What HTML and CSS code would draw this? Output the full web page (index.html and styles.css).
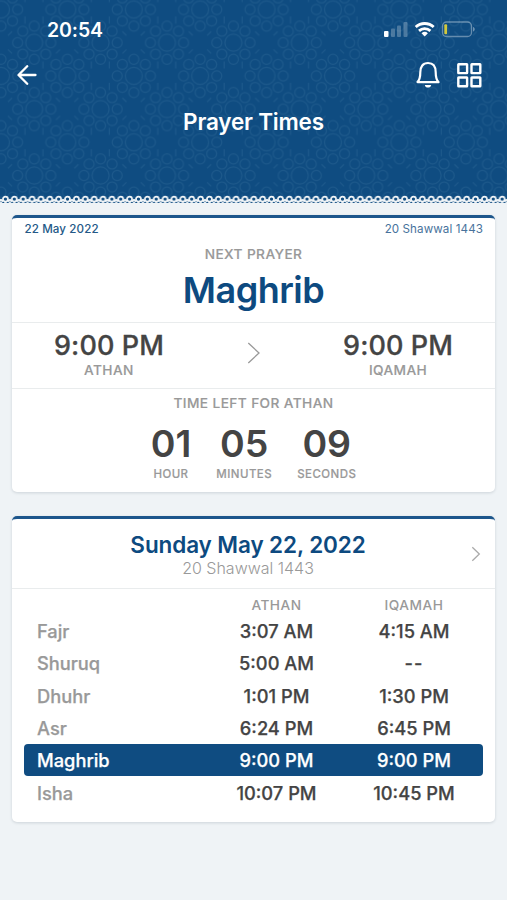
FILE: index.html
```html
<!DOCTYPE html>
<html lang="en">
<head>
<meta charset="utf-8">
<title>Prayer Times</title>
<link rel="stylesheet" href="styles.css">
</head>
<body>
<header class="hero">
  <svg class="hero-pattern" width="507" height="204" aria-hidden="true">
    <defs>
      <pattern id="stars" x="1" y="9.5" width="66.4" height="66.4" patternUnits="userSpaceOnUse">
        <g fill="none" stroke="#5d91b8" stroke-opacity=".17" stroke-width="1.2">
          <circle cx="33.2" cy="33.2" r="8.500"/>
          <circle cx="33.2" cy="16.6" r="5"/><circle cx="33.2" cy="49.8" r="5"/>
          <circle cx="16.6" cy="33.2" r="5"/><circle cx="49.8" cy="33.2" r="5"/>
          <circle cx="21.7" cy="21.7" r="5"/><circle cx="44.7" cy="21.7" r="5"/>
          <circle cx="21.7" cy="44.7" r="5"/><circle cx="44.7" cy="44.7" r="5"/>
          <circle cx="0" cy="0" r="8.500"/><circle cx="66.4" cy="0" r="8.500"/><circle cx="0" cy="66.4" r="8.500"/><circle cx="66.4" cy="66.4" r="8.500"/>
          <circle cx="16.6" cy="0" r="5"/><circle cx="49.8" cy="0" r="5"/><circle cx="16.6" cy="66.4" r="5"/><circle cx="49.8" cy="66.4" r="5"/>
          <circle cx="0" cy="16.6" r="5"/><circle cx="66.4" cy="16.6" r="5"/><circle cx="0" cy="49.8" r="5"/><circle cx="66.4" cy="49.8" r="5"/>
          <circle cx="11.5" cy="11.5" r="5"/><circle cx="54.9" cy="11.5" r="5"/><circle cx="11.5" cy="54.9" r="5"/><circle cx="54.9" cy="54.9" r="5"/>
          <path d="M7 26 11 22M55 22 59 26M7 40 11 44M55 44 59 40M24 7V14M42 7V14M24 52V59M42 52V59"/>
        </g>
      </pattern>
      <pattern id="lace" x="1" y="195" width="8.87" height="9" patternUnits="userSpaceOnUse">
        <path d="M0 8H8.87V9H0Z" fill="#eff3f6"/>
        <path d="M3.300 6.500H5.600V8H3.300ZM0 6.500H1.200V8H0ZM7.700 6.500H8.870V8H7.700Z" fill="#dfe8ef"/>
        <circle cx="4.43" cy="4.1" r="2.500" fill="#0f4c81" stroke="#f3f6f8" stroke-width="1.700"/>
        <path d="M0 4.500 2.200 6.500M8.870 4.500 6.700 6.500" stroke="#f3f6f8" stroke-width="1.700"/>
      </pattern>
    </defs>
    <rect width="507" height="204" fill="url(#stars)"/>
    <rect y="195" width="507" height="9" fill="url(#lace)"/>
  </svg>
  <div class="status">
    <span class="clock">20:54</span>
    <svg class="signals" width="92" height="20" viewBox="0 0 92 20" fill="none">
      <g fill="#fff"><rect x="0" y="11" width="4.5" height="6" rx="1"/><g opacity=".25"><rect x="7" y="8.500" width="4" height="8.500" rx="1"/><rect x="13" y="5.500" width="4" height="11.500" rx="1"/><rect x="19.500" y="2" width="4" height="15" rx="1"/></g></g>
      <g stroke="#fff" stroke-width="2.800"><path d="M31.700 7.100a13 13 0 0 1 18 0M35 10.900a8.500 8.500 0 0 1 11.400 0"/></g>
      <path d="M37.500 13.300a4.800 4.800 0 0 1 6.400 0L40.700 16.500Z" fill="#fff"/>
      <rect x="58.500" y="2" width="29" height="14.500" rx="4" stroke="#fff" stroke-opacity=".36" stroke-width="1.300"/>
      <path d="M89 7v4.500c2.300-.7 2.300-3.800 0-4.500Z" fill="#fff" opacity=".4"/>
      <rect x="60.300" y="4.200" width="2.800" height="10" rx="1" fill="#d2c83d"/>
    </svg>
  </div>
  <div class="toolbar">
    <svg width="20" height="20" viewBox="0 0 20 20" fill="none" stroke="#fff" stroke-width="2.300" stroke-linecap="round" stroke-linejoin="round"><path d="M10.200 1.200 1.500 10l8.700 8.800M1.700 10H18.500"/></svg>
    <div class="actions">
      <svg width="24" height="28" viewBox="0 0 24 28" fill="none" stroke="#fff" stroke-width="2.200"><path d="M1.500 21.100C4 18.500 4.300 16.500 4.300 11.300 4.300 5.400 7 2 12 2s7.700 3.400 7.700 9.300c0 5.200.3 7.200 2.800 9.800Z" stroke-linejoin="round"/><path d="M8.800 23.900h6.400c-.5 3.600-5.900 3.600-6.400 0Z" fill="#fff" stroke="none"/></svg>
      <svg width="25" height="25" viewBox="0 0 25 25" fill="none" stroke="#fff" stroke-width="2.400"><rect x="1.300" y="1.300" width="8.800" height="8.800" rx=".3"/><rect x="14.500" y="1.300" width="8.800" height="8.800" rx=".3"/><rect x="1.300" y="14.500" width="8.800" height="8.800" rx=".3"/><rect x="14.500" y="14.500" width="8.800" height="8.800" rx=".3"/></svg>
    </div>
  </div>
  <h1 class="title">Prayer Times</h1>
</header>
<main>
  <section class="card next">
    <div class="dates"><span class="greg">22 May 2022</span><span class="hijri">20 Shawwal 1443</span></div>
    <div class="label caption">NEXT PRAYER</div>
    <div class="prayer">Maghrib</div>
    <div class="times">
      <div class="time"><div class="hour">9:00 PM</div><div class="label">ATHAN</div></div>
      <svg class="chevron" width="14" height="24" viewBox="0 0 14 24" fill="none" stroke="#999" stroke-width="1.300"><path d="M1.300 2 12 12 1.300 22"/></svg>
      <div class="time"><div class="hour">9:00 PM</div><div class="label">IQAMAH</div></div>
    </div>
    <div class="label left">TIME LEFT FOR ATHAN</div>
    <div class="countdown">
      <div class="unit"><div class="num">01</div><div class="small">HOUR</div></div>
      <div class="unit"><div class="num">05</div><div class="small">MINUTES</div></div>
      <div class="unit"><div class="num">09</div><div class="small">SECONDS</div></div>
    </div>
  </section>
  <section class="card day">
    <div class="day-head">
      <div class="day-text"><div class="day-title">Sunday May 22, 2022</div><div class="day-hijri">20 Shawwal 1443</div></div>
      <svg class="day-next" width="10" height="16" viewBox="0 0 10 16" fill="none" stroke="#aaa" stroke-width="1.300"><path d="M1.300 1.300 8.300 8 1.300 14.700"/></svg>
    </div>
    <div class="schedule">
      <div class="row heading"><span></span><span class="label">ATHAN</span><span class="label">IQAMAH</span></div>
      <div class="row"><span class="name">Fajr</span><span>3:07 AM</span><span>4:15 AM</span></div>
      <div class="row"><span class="name">Shuruq</span><span>5:00 AM</span><span class="none">--</span></div>
      <div class="row"><span class="name">Dhuhr</span><span>1:01 PM</span><span>1:30 PM</span></div>
      <div class="row"><span class="name">Asr</span><span>6:24 PM</span><span>6:45 PM</span></div>
      <div class="row active"><span class="name">Maghrib</span><span>9:00 PM</span><span>9:00 PM</span></div>
      <div class="row"><span class="name">Isha</span><span>10:07 PM</span><span>10:45 PM</span></div>
    </div>
  </section>
</main>
</body>
</html>
```
FILE: styles.css
```css
* { box-sizing: border-box; }
body { margin: 0; height: 900px; overflow: hidden; background: #eff3f6; font-family: Inter, "Liberation Sans", sans-serif; color: #444; }
svg { display: block; flex: none; }
.hero { position: relative; height: 204px; background: #0f4c81; color: #fff; }
.hero-pattern { position: absolute; inset: 0; }
.status, .toolbar, .title { position: relative; }
.status { display: flex; justify-content: space-between; height: 60px; padding: 20px 31px 0 47px; }
.clock { font-size: 19.5px; line-height: 20px; font-weight: 600; letter-spacing: -.1px; }
.toolbar { display: flex; justify-content: space-between; align-items: center; height: 30px; padding: 0 25px 0 17px; }
.actions { display: flex; align-items: center; gap: 17px; }
.title { margin: 17px 0 0; font-size: 22.5px; line-height: 30px; font-weight: 600; text-align: center; letter-spacing: -.2px; }
main { padding: 11px 12px 0; }
.card { background: #fff; border-radius: 5px; border-top: 3px solid #1d568c; box-shadow: 0 1px 3px rgba(40, 60, 80, .17); }
.next { height: 277px; }
.dates { display: flex; justify-content: space-between; padding: 4px 12px 0 12.500px; font-size: 11.600px; line-height: 15px; color: #245987; letter-spacing: .1px; }
.greg { font-weight: 500; }
.hijri { color: #47729c; }
.label { font-size: 13.700px; line-height: 16px; font-weight: 500; color: #999; letter-spacing: .4px; text-align: center; }
.caption { margin-top: 9px; -webkit-text-stroke: .15px currentColor; }
.prayer { margin-top: 5px; height: 55px; font-size: 36px; line-height: 46px; font-weight: 600; color: #0d4a80; text-align: center; letter-spacing: -.5px; }
.times { display: flex; justify-content: space-between; height: 67px; padding: 6px 42px 0; border-top: 1px solid #e9eced; border-bottom: 1px solid #e9eced; }
.hour { font-size: 27px; line-height: 34px; font-weight: 500; letter-spacing: .1px; -webkit-text-stroke: .3px currentColor; }
.times .label { margin-top: -1px; -webkit-text-stroke: .15px currentColor; }
.chevron { margin-top: 12px; }
.left { margin-top: 6px; -webkit-text-stroke: .15px currentColor; }
.countdown { display: flex; justify-content: center; gap: 25px; margin: 10px 0 0; }
.unit { text-align: center; }
.num { font-size: 37.500px; line-height: 46px; font-weight: 600; }
.small { font-size: 11.500px; line-height: 15px; font-weight: 500; color: #999; letter-spacing: .45px; -webkit-text-stroke: .15px currentColor; }
.day { margin-top: 24px; height: 306px; }
.day-head { display: flex; align-items: center; height: 70px; padding: 0 14px 0 13px; border-bottom: 1px solid #e9eced; }
.day-text { flex: 1; padding-top: 1px; text-align: center; }
.day-title { font-size: 22.500px; line-height: 27px; font-weight: 600; color: #0d4a80; letter-spacing: -.1px; }
.day-hijri { font-size: 16px; line-height: 20px; font-weight: 300; color: #999; }
.schedule { padding: 6px 12px 0; }
.row { display: grid; grid-template-columns: 1fr 137px 138px; height: 32.300px; padding-left: 13px; align-items: center; text-align: center; font-size: 18.300px; font-weight: 500; -webkit-text-stroke: .25px currentColor; }
.row .label { letter-spacing: .5px; -webkit-text-stroke: 0; }
.none { letter-spacing: 1px; }
.heading { height: 20px; }
.name { text-align: left; color: #999; }
.active { background: #0f4c81; border-radius: 4px; color: #fff; }
.active .name { color: #fff; }
```
